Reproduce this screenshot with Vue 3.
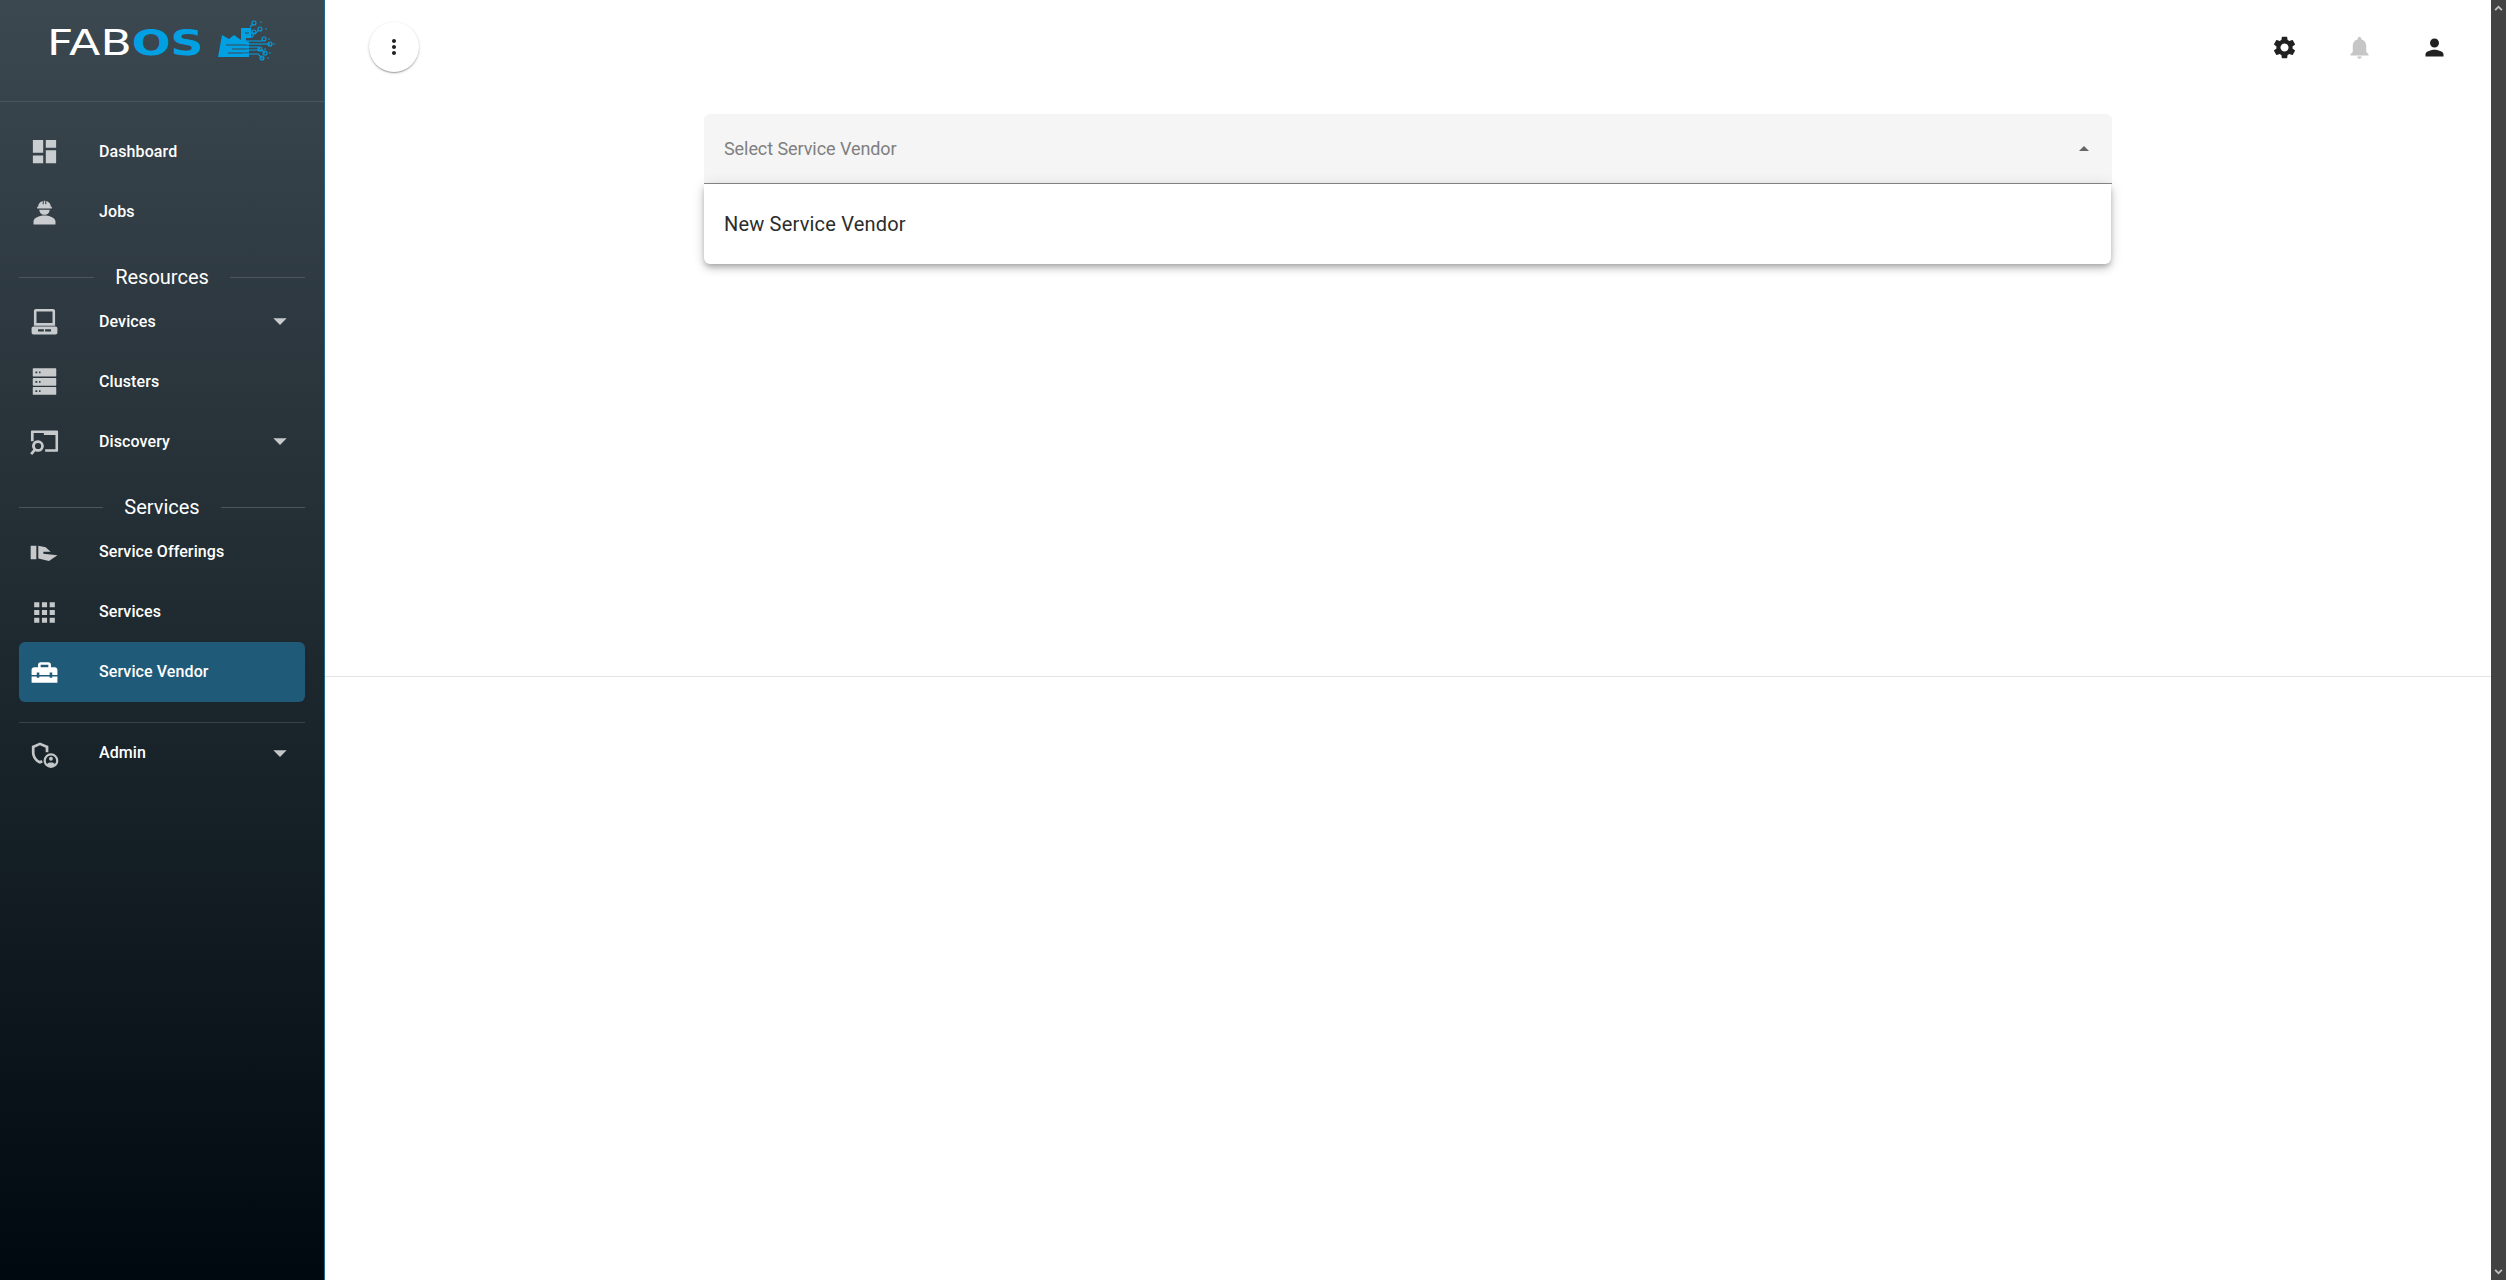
<script setup>
const top = [
  { label: 'Dashboard', icon: 'dashboard' },
  { label: 'Jobs', icon: 'jobs' },
]
const resources = [
  { label: 'Devices', icon: 'devices', caret: true },
  { label: 'Clusters', icon: 'clusters' },
  { label: 'Discovery', icon: 'discovery', caret: true },
]
const services = [
  { label: 'Service Offerings', icon: 'offerings' },
  { label: 'Services', icon: 'apps' },
  { label: 'Service Vendor', icon: 'vendor', active: true },
]
const groups = [
  { title: null, items: top },
  { title: 'Resources', items: resources },
  { title: 'Services', items: services },
]
const admin = { label: 'Admin', icon: 'admin', caret: true }
const paths = {
  dashboard: 'M3 13h8V3H3v10zm0 8h8v-6H3v6zm10 0h8V11h-8v10zm0-18v6h8V3h-8z',
  jobs: 'M3.500 22v-2.500c0-3 5.500-4.500 8.500-4.500s8.500 1.500 8.500 4.500V22zM8 10.600h8c0 2.300-1.800 4-4 4s-4-1.700-4-4zM6.300 9.600V8.400h.8C7.200 5.800 8.700 4.400 10.600 3.900v2.500h.8V3.600h1.200v2.800h.8V3.900c1.900.5 3.400 1.900 3.500 4.500h.8v1.200z',
  devices: 'M5.400 2.300h13.200c.9 0 1.600.7 1.600 1.600v11.300H3.800V3.900c0-.9.700-1.600 1.600-1.600zM5.800 4.300v8.900h12.400V4.300zM3.500 15.800h17c.9 0 1.500.6 1.500 1.500v3.200c0 .9-.6 1.500-1.500 1.500h-17c-.9 0-1.500-.6-1.500-1.500v-3.200c0-.9.600-1.500 1.500-1.500zM7 18v1.700h4.500V18zM12.500 18v1.700H17V18z',
  clusters: 'M3.400 1.800h17.200c.3 0 .5.2.5.500v5.400c0 .3-.2.5-.5.5H3.400c-.3 0-.5-.2-.5-.5V2.300c0-.3.2-.5.5-.5zM5 4.300v1.400h1.400V4.300zM7.800 4.300v1.400h1.100V4.300zM3.400 9.300h17.200c.3 0 .5.2.5.500v5c0 .3-.2.5-.5.5H3.400c-.3 0-.5-.2-.5-.5v-5c0-.3.2-.5.5-.5zM5 11.600V13h1.400v-1.400zM7.800 11.600V13h1.100v-1.400zM3.400 16.300h17.200c.3 0 .5.2.5.500v5c0 .3-.2.5-.5.5H3.400c-.3 0-.5-.2-.5-.5v-5c0-.3.2-.5.5-.5zM5 18.700v1.400h1.400v-1.400zM7.800 18.700v1.400h1.100v-1.400z',
  discovery: 'M2.500 3.500h19c.6 0 1 .4 1 1v14.500c0 .6-.4 1-1 1h-9v-2h8v-11h-9V5.500H3.600v6.300H1.500V4.500c0-.6.400-1 1-1zM7 11a4.500 4.500 0 0 1 0 9 4.500 4.500 0 0 1-2.100-.5l-2.400 2.900-1.600-1.300 2.400-2.900A4.500 4.500 0 0 1 7 11zM7 13.100a2.400 2.400 0 1 0 0 4.800 2.400 2.400 0 0 0 0-4.800z',
  offerings: 'M1.300 6.800h4.400v10.400H1.300zM7.200 6.800l5.700 1.100 3.900 3.600h-5.700V13L22 14.100l-6.500 4.400-8.300-1.800z',
  apps: 'M4 8h4V4H4v4zm6 12h4v-4h-4v4zm-6 0h4v-4H4v4zm0-6h4v-4H4v4zm6 0h4v-4h-4v4zm6-10v4h4V4h-4zm-6 4h4V4h-4v4zm6 6h4v-4h-4v4zm0 6h4v-4h-4v4z',
  vendor: 'M18 16h-2v-1H8v1H6v-1H2v5h20v-5h-4zm2-8h-3V6c0-1.100-.9-2-2-2H9c-1.100 0-2 .9-2 2v2H4c-1.100 0-2 .9-2 2v4h4v-2h2v2h8v-2h2v2h4v-4c0-1.100-.9-2-2-2zm-5 0H9V6h6v2z',
  admin: 'M8.500 3.400 15 6.100V11h-2.100V7.500L8.500 5.600 4.300 7.500V11c0 3 1.800 5.600 4.200 6.700l1.300-.6.900 1.900-2.200 1C4.900 18.700 2.200 15 2.200 11V6.100zM17 11.800a5.700 5.700 0 1 1 0 11.400 5.700 5.700 0 0 1 0-11.400zM17 13.500a4 4 0 0 0-3 6.600c.7-.7 1.800-1.100 3-1.100s2.300.4 3 1.100a4 4 0 0 0-3-6.600zM17 14.600a1.500 1.500 0 1 1 0 3 1.500 1.500 0 0 1 0-3z',
  more: 'M12 8c1.100 0 2-.9 2-2s-.9-2-2-2-2 .9-2 2 .9 2 2 2zm0 2c-1.100 0-2 .9-2 2s.9 2 2 2 2-.9 2-2-.9-2-2-2zm0 6c-1.100 0-2 .9-2 2s.9 2 2 2 2-.9 2-2-.9-2-2-2z',
  gear: 'M19.140 12.940c.04-.3.06-.61.06-.94 0-.32-.02-.64-.07-.94l2.030-1.580c.18-.14.23-.41.12-.61l-1.920-3.320c-.12-.22-.37-.29-.59-.22l-2.390.96c-.5-.38-1.030-.7-1.620-.94l-.36-2.540c-.04-.24-.24-.41-.48-.41h-3.840c-.24 0-.43.17-.47.41l-.36 2.540c-.59.24-1.130.57-1.620.94l-2.390-.96c-.22-.08-.47 0-.59.22L2.740 8.870c-.12.21-.08.47.12.61l2.030 1.580c-.05.3-.09.63-.09.94s.02.64.07.94l-2.030 1.580c-.18.14-.23.41-.12.61l1.920 3.320c.12.22.37.29.59.22l2.390-.96c.5.38 1.030.7 1.620.94l.36 2.540c.05.24.24.41.48.41h3.840c.24 0 .44-.17.47-.41l.36-2.540c.59-.24 1.130-.56 1.620-.94l2.390.96c.22.08.47 0 .59-.22l1.920-3.320c.12-.22.07-.47-.12-.61l-2.010-1.580zM12 15.600c-1.980 0-3.600-1.620-3.600-3.600s1.620-3.600 3.600-3.600 3.600 1.620 3.600 3.600-1.620 3.600-3.600 3.600z',
  bell: 'M12 22c1.100 0 2-.9 2-2h-4c0 1.100.89 2 2 2zm6-6v-5c0-3.070-1.640-5.640-4.500-6.320V4c0-.83-.67-1.500-1.500-1.500s-1.500.67-1.500 1.500v.68C7.630 5.360 6 7.920 6 11v5l-2 2v1h16v-1l-2-2z',
  person: 'M12 12c2.210 0 4-1.790 4-4s-1.790-4-4-4-4 1.790-4 4 1.790 4 4 4zm0 2c-2.670 0-8 1.340-8 4v2h16v-2c0-2.660-5.330-4-8-4z',
}
const circuits = [
  'M250 27 252.500 24.500', 'M250 33H256L258.500 30', 'M247 37H252.500L253.500 34',
  'M246 41H262', 'M246 44H262L270 44', 'M246 47H258L260 49', 'M246 50H262L265 53', 'M242 54H258L262 58H264',
]
const nodes = [[254, 23], [260, 29], [254, 32], [264, 39], [270, 44], [260, 49], [265, 53], [262, 58]]
const dots = [[261, 22], [266, 29], [269, 39], [274, 44], [265, 49], [270, 53], [268, 58]]
</script>

<template>
  <div class="app">
    <aside class="sidebar">
      <div class="brand">
        <div class="logo">
          <span class="wordmark"><span class="fab">FAB</span><span class="os">OS</span></span>
          <svg class="mark" viewBox="215 20 65 42" width="65" height="42">
            <path d="M218 57 222 35 229 39 234 35 241 40V28H251V38H246V41L249 42V57z" fill="#00a0e3" />
            <path d="M226 45H250M232 49H250M228 53H250M245 33H249" fill="none" stroke="#3a464e" stroke-width="1" />
            <path v-for="(d, i) in circuits" :key="i" :d="d" fill="none" stroke="#00a0e3" stroke-width="1.100" />
            <circle v-for="(n, i) in nodes" :key="'n' + i" :cx="n[0]" :cy="n[1]" r="2" fill="none" stroke="#00a0e3" stroke-width="1.100" />
            <circle v-for="(n, i) in dots" :key="'d' + i" :cx="n[0]" :cy="n[1]" r="0.800" fill="#00a0e3" />
          </svg>
        </div>
      </div>
      <nav class="nav">
        <div v-for="g in groups" :key="g.title || 'top'" class="group">
          <div v-if="g.title" class="section">
            <span class="rule"></span>
            <span class="section-title">{{ g.title }}</span>
            <span class="rule"></span>
          </div>
          <div v-for="it in g.items" :key="it.label" class="item" :class="{ active: it.active }">
            <svg class="nav-icon" viewBox="0 0 24 24"><path :d="paths[it.icon]" fill-rule="evenodd" /></svg>
            <span class="item-label">{{ it.label }}</span>
            <svg v-if="it.caret" class="caret" viewBox="0 0 24 24"><path d="M7 10l5 5 5-5z" /></svg>
          </div>
        </div>
        <div class="nav-divider"></div>
        <div class="item admin-item">
          <svg class="nav-icon" viewBox="0 0 24 24"><path :d="paths[admin.icon]" fill-rule="evenodd" /></svg>
          <span class="item-label">{{ admin.label }}</span>
          <svg class="caret" viewBox="0 0 24 24"><path d="M7 10l5 5 5-5z" /></svg>
        </div>
      </nav>
    </aside>

    <main class="main">
      <header class="toolbar">
        <button class="more-btn" type="button">
          <svg viewBox="0 0 24 24" width="24" height="24"><path :d="paths.more" /></svg>
        </button>
        <div class="tools">
          <svg class="tool" viewBox="0 0 24 24"><path :d="paths.gear" /></svg>
          <svg class="tool muted" viewBox="0 0 24 24"><path :d="paths.bell" /></svg>
          <svg class="tool" viewBox="0 0 24 24"><path :d="paths.person" /></svg>
        </div>
      </header>
      <section class="panel">
        <div class="picker">
          <div class="select">
            <span class="placeholder">Select Service Vendor</span>
            <svg class="select-caret" viewBox="0 0 24 24"><path d="M7 14l5-5 5 5z" /></svg>
          </div>
          <div class="menu"><div class="option">New Service Vendor</div></div>
        </div>
      </section>
      <div class="main-rule"></div>
    </main>

    <div class="scrollbar">
      <svg viewBox="0 0 15 15" width="15" height="15"><path d="M3.500 9.500 7.500 5.500l4 4-1.300 1.200-2.700-2.600-2.700 2.600z" /></svg>
      <svg viewBox="0 0 15 15" width="15" height="15"><path d="M3.500 5.500 7.500 9.500l4-4-1.300-1.200-2.700 2.600-2.700-2.600z" /></svg>
    </div>
  </div>
</template>

<style>
html, body { margin: 0; overflow: hidden; }
</style>

<style scoped>
.app {
  display: flex;
  width: 2506px;
  height: 1280px;
  background: #fff;
  font-family: Roboto, "Liberation Sans", sans-serif;
  overflow: hidden;
}
.sidebar {
  flex: none;
  width: 324px;
  height: 1280px;
  border-right: 1px solid #1d6a90;
  background: linear-gradient(180deg, #3c4850 0%, #00090f 100%);
  color: #fff;
}
.brand {
  height: 101px;
  border-bottom: 1px solid #4a555c;
}
.logo {
  display: flex;
  align-items: flex-start;
  padding: 20px 0 0 47px;
}
.wordmark {
  display: inline-block;
  width: 125px;
  margin-right: 43px;
  padding-top: 3px;
  font-family: "DejaVu Sans", sans-serif;
  font-size: 36px;
  line-height: 40px;
  white-space: nowrap;
  transform: scaleX(1.27);
  transform-origin: left center;
}
.fab { color: #fff; font-weight: 400; }
.os { color: #00a0e3; font-weight: 700; }
.nav { padding: 19px 19px 0; }
.section {
  display: flex;
  align-items: center;
  gap: 21px;
  height: 51px;
  padding-top: 21px;
  box-sizing: border-box;
}
.group:nth-child(2) .section { height: 50px; padding-top: 22px; }
.group:nth-child(3) .item-label { margin-bottom: 2px; }
.rule { flex: 1; height: 1px; background: #4a555c; }
.section-title { font-size: 20px; line-height: 30px; font-weight: 400; }
.item {
  display: flex;
  align-items: center;
  height: 60px;
  padding-left: 10px;
  padding-right: 9px;
  border-radius: 6px;
  box-sizing: border-box;
}
.item.active { background: #205a79; }
.nav-icon {
  flex: none;
  width: 31px;
  height: 31px;
  fill: #fff;
  opacity: 0.74;
}
.active .nav-icon { opacity: 1; }
.item-label {
  flex: 1;
  margin-left: 39px;
  font-size: 16px;
  font-weight: 500;
  letter-spacing: 0.1px;
  color: #fff;
}
.admin-item .item-label { margin-bottom: 1px; }
.caret { flex: none; width: 32px; height: 32px; fill: #fff; opacity: 0.74; }
.nav-divider { height: 1px; margin-top: 20px; background: #38434a; }
.main {
  flex: 1;
  min-width: 0;
  display: flex;
  flex-direction: column;
}
.toolbar {
  display: flex;
  align-items: center;
  justify-content: space-between;
  height: 94px;
  padding: 0 43px 0 44px;
  flex: none;
}
.more-btn {
  display: flex;
  align-items: center;
  justify-content: center;
  width: 50px;
  height: 50px;
  padding: 0;
  border: 0;
  border-radius: 50%;
  background: #fff;
  fill: #212121;
  box-shadow: 0 1px 3px rgba(0, 0, 0, 0.2), 0 1px 1px rgba(0, 0, 0, 0.14), 0 2px 1px -1px rgba(0, 0, 0, 0.12);
}
.tools { display: flex; gap: 48px; }
.tool { width: 27px; height: 27px; fill: #212121; }
.tool.muted { fill: #c6c6c6; }
.panel {
  flex: none;
  height: 582px;
  display: flex;
  justify-content: center;
  padding-top: 20px;
  box-sizing: border-box;
}
.picker { position: relative; width: 1408px; }
.select {
  display: flex;
  align-items: center;
  justify-content: space-between;
  height: 70px;
  padding: 0 16px 0 20px;
  box-sizing: border-box;
  background: #f5f5f5;
  border-radius: 6px 6px 0 0;
  border-bottom: 1px solid #8c8c8c;
}
.placeholder { font-size: 18px; letter-spacing: -0.07px; color: #7f7f7f; }
.select-caret { width: 24px; height: 24px; fill: #666; }
.menu {
  position: absolute;
  left: 0;
  right: 1px;
  top: 70px;
  height: 80px;
  background: #fff;
  border-radius: 0 0 6px 6px;
  box-shadow: 0 3px 5px -1px rgba(0, 0, 0, 0.2), 0 5px 8px 0 rgba(0, 0, 0, 0.14), 0 1px 14px 0 rgba(0, 0, 0, 0.12);
  display: flex;
  align-items: center;
  padding-left: 20px;
  box-sizing: border-box;
}
.option { font-size: 20px; letter-spacing: 0.19px; color: #2c2c2c; }
.main-rule { height: 1px; background: #e4e4e4; }
.scrollbar {
  flex: none;
  width: 15px;
  height: 1280px;
  background: #424242;
  display: flex;
  flex-direction: column;
  justify-content: space-between;
  fill: #c0c0c0;
}
</style>
